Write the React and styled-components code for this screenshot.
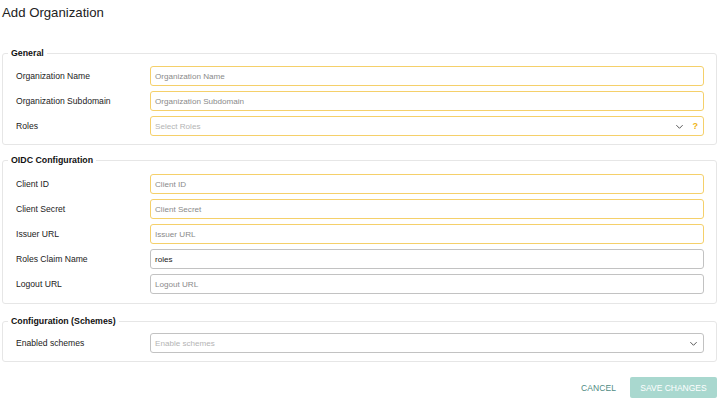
import React from "react";
import styled, { createGlobalStyle } from "styled-components";

const Global = createGlobalStyle`
  html, body { margin: 0; padding: 0; background: #fff; }
  body { font-family: "Liberation Sans", Arial, Helvetica, sans-serif; color: #222; }
  * { box-sizing: border-box; }
`;

const Page = styled.div`
  width: 720px;
  padding: 4px 3px 0 2px;
`;

const Title = styled.h1`
  margin: 0 0 27px 0;
  font-size: 13.2px;
  font-weight: 400;
  line-height: 17px;
  color: #222;
`;

const Section = styled.fieldset`
  margin: 0 0 ${(p) => p.$mb}px 0;
  padding: ${(p) => p.$pt}px 12px ${(p) => p.$pb}px 13px;
  border: 1px solid #e6e6e6;
  border-radius: 3px;
  display: flex;
  flex-direction: column;
  gap: 5px;
  min-width: 0;
`;

const Legend = styled.legend`
  padding: 0 3px;
  margin-left: -8px;
  font-size: 8.8px;
  font-weight: 700;
  line-height: 11px;
  color: #111;
`;

const Row = styled.div`
  display: grid;
  grid-template-columns: 134px 1fr;
  align-items: center;
  height: 20px;
`;

const Label = styled.label`
  font-size: 8.6px;
  color: #222;
`;

const Field = styled.div`
  height: 20px;
  border: 1px solid ${(p) => (p.$warn ? "#f5d06a" : "#c2c2c2")};
  border-radius: 3px;
  display: flex;
  align-items: center;
  padding: 0 4px;
  font-size: 8.1px;
  color: ${(p) => (p.$value ? "#222" : p.$select ? "#b4b4b4" : "#8a8a8a")};
  background: #fff;
`;

const FieldText = styled.span`
  flex: 1;
`;

const Chevron = styled.svg`
  width: 9px;
  height: 9px;
  margin-right: ${(p) => p.$mr}px;
`;

const Help = styled.span`
  color: #efb313;
  font-weight: 700;
  font-size: 9px;
  margin-right: 1px;
`;

const Actions = styled.div`
  display: flex;
  justify-content: flex-end;
  align-items: center;
  gap: 14px;
  margin-top: 15px;
`;

const TextButton = styled.button`
  border: none;
  background: none;
  font-family: inherit;
  font-size: 8.5px;
  color: #4f8b83;
  padding: 0;
  letter-spacing: 0.1px;
`;

const PrimaryButton = styled.button`
  border: none;
  background: #a9d8cf;
  color: #fff;
  font-family: inherit;
  font-size: 8.5px;
  height: 21px;
  width: 87px;
  border-radius: 2px;
  padding: 0;
`;

const ChevronIcon = ({ mr = 0 }) => (
  <Chevron $mr={mr} viewBox="0 0 10 10">
    <path d="M1.5 3.5 L5 7 L8.5 3.5" fill="none" stroke="#555" strokeWidth="1.1" />
  </Chevron>
);

const Input = ({ label, placeholder, value, warn }) => (
  <Row>
    <Label>{label}</Label>
    <Field $warn={warn} $value={!!value}>
      <FieldText>{value || placeholder}</FieldText>
    </Field>
  </Row>
);

export default function App() {
  return (
    <>
      <Global />
      <Page>
        <Title>Add Organization</Title>
        <Section $pt={7} $pb={8} $mb={10}>
          <Legend>General</Legend>
          <Input label="Organization Name" placeholder="Organization Name" warn />
          <Input label="Organization Subdomain" placeholder="Organization Subdomain" warn />
          <Row>
            <Label>Roles</Label>
            <Field $warn $select>
              <FieldText>Select Roles</FieldText>
              <ChevronIcon mr={9} />
              <Help>?</Help>
            </Field>
          </Row>
        </Section>
        <Section $pt={8} $pb={9} $mb={12}>
          <Legend>OIDC Configuration</Legend>
          <Input label="Client ID" placeholder="Client ID" warn />
          <Input label="Client Secret" placeholder="Client Secret" warn />
          <Input label="Issuer URL" placeholder="Issuer URL" warn />
          <Input label="Roles Claim Name" value="roles" />
          <Input label="Logout URL" placeholder="Logout URL" />
        </Section>
        <Section $pt={6} $pb={8} $mb={0}>
          <Legend>Configuration (Schemes)</Legend>
          <Row>
            <Label>Enabled schemes</Label>
            <Field $select>
              <FieldText>Enable schemes</FieldText>
              <ChevronIcon mr={1} />
            </Field>
          </Row>
        </Section>
        <Actions>
          <TextButton>CANCEL</TextButton>
          <PrimaryButton>SAVE CHANGES</PrimaryButton>
        </Actions>
      </Page>
    </>
  );
}
